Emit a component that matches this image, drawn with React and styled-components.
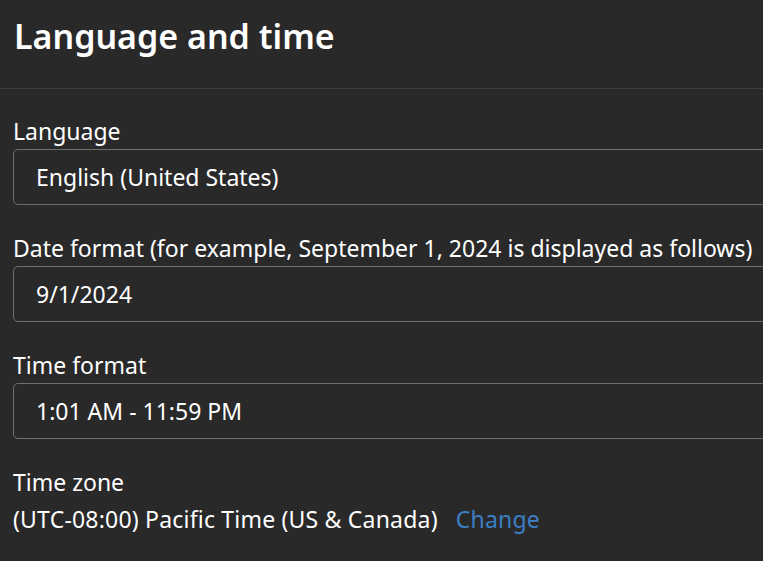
import React from "react";
import styled, { createGlobalStyle } from "styled-components";

const GlobalStyle = createGlobalStyle`
	html, body {
		margin: 0;
		padding: 0;
		background: #292929;
		overflow: hidden;
	}
	body {
		font-family: "Noto Sans", "Open Sans", sans-serif;
		color: #ffffff;
	}
`;

const Page = styled.div`
	width: 763px;
	height: 561px;
	overflow: hidden;
	background: #292929;
`;

const Header = styled.div`
	height: 88px;
	border-bottom: 1px solid #3d3d3d;
	padding-left: 14px;
	display: flex;
	align-items: flex-start;
`;

const Title = styled.h1`
	margin: 14px 0 0;
	font-size: 34px;
	font-weight: 600;
	line-height: 44px;
`;

const Body = styled.div`
	padding: 27px 0 0 13px;
	display: flex;
	flex-direction: column;
	gap: 28px;
`;

const Field = styled.div`
	display: flex;
	flex-direction: column;
	gap: ${p => p.$gap || 0}px;
`;

const Label = styled.div`
	font-size: 23px;
	line-height: 30px;
	color: #ffffff;
`;

const Box = styled.div`
	width: 800px;
	height: 56px;
	box-sizing: border-box;
	border: 1px solid #6e6e6e;
	border-radius: 5px;
	display: flex;
	align-items: center;
	padding-left: 22px;
	font-size: 23px;
	color: #ffffff;
`;

const ZoneRow = styled.div`
	display: flex;
	align-items: center;
	gap: 18px;
	font-size: 23px;
	line-height: 30px;
	letter-spacing: 0.2px;
`;

const Link = styled.a`
	color: #3b7fc4;
	text-decoration: none;
	cursor: pointer;
`;

const fields = [
	{ label: "Language", value: "English (United States)" },
	{
		label: "Date format (for example, September 1, 2024 is displayed as follows)",
		value: "9/1/2024"
	},
	{ label: "Time format", value: "1:01 AM - 11:59 PM" }
];

export default function App() {
	return (
		<Page>
			<GlobalStyle />
			<Header>
				<Title>Language and time</Title>
			</Header>
			<Body>
				{fields.map(f => (
					<Field key={f.label} $gap={3}>
						<Label>{f.label}</Label>
						<Box>{f.value}</Box>
					</Field>
				))}
				<Field $gap={7}>
					<Label>Time zone</Label>
					<ZoneRow>
						<span>(UTC-08:00) Pacific Time (US &amp; Canada)</span>
						<Link>Change</Link>
					</ZoneRow>
				</Field>
			</Body>
		</Page>
	);
}
